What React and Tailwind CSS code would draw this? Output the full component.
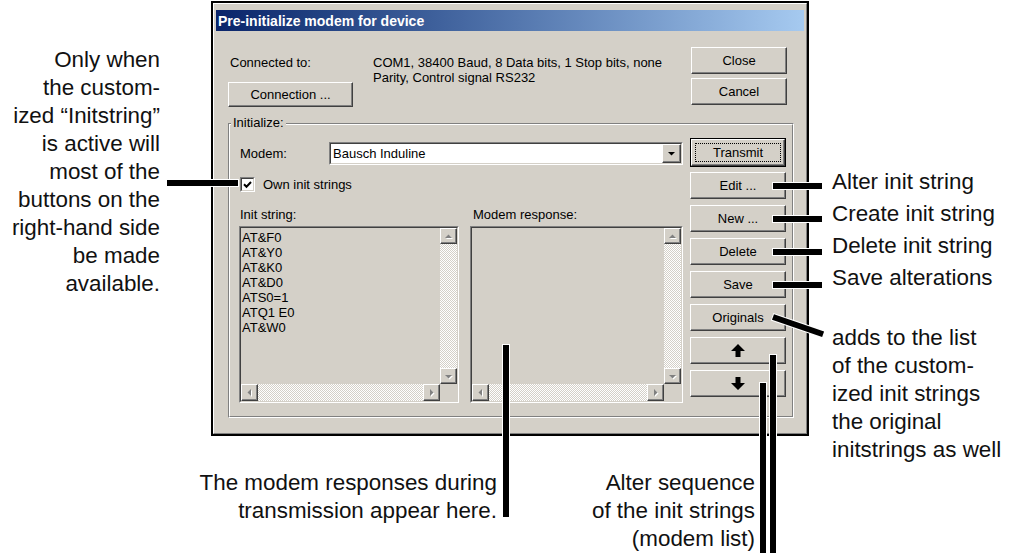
import React from 'react';

const raised =
  'bg-[#d4d0c8] border border-t-white border-l-white border-r-[#404040] border-b-[#404040] shadow-[inset_-1px_-1px_#808080]';
const checker =
  'bg-[conic-gradient(#ffffff_25%,#d4d0c8_0_50%,#ffffff_0_75%,#d4d0c8_0)] bg-[length:2px_2px]';

const Button = ({ children, className = '' }) => (
  <div className={`w-[96px] h-[27px] flex items-center justify-center ${raised} ${className}`}>
    {children}
  </div>
);

// small grey (disabled) triangle of the scroll bar buttons
const ScrollBtn = ({ dir, className = '' }) => {
  const pts = {
    up: '1,6 4.5,2.5 8,6',
    down: '1,3 4.5,6.5 8,3',
    left: '6,1 2.5,4.5 6,8',
    right: '3,1 6.5,4.5 3,8',
  };
  return (
    <div className={`flex items-center justify-center ${raised} ${className}`}>
      <svg width="9" height="9" viewBox="0 0 9 9">
        <polygon points={pts[dir]} fill="#ffffff" transform="translate(1 1)" />
        <polygon points={pts[dir]} fill="#808080" />
      </svg>
    </div>
  );
};

const Sunken = ({ className = '', inner = '', children }) => (
  <div className={`border border-t-[#808080] border-l-[#808080] border-r-white border-b-white ${className}`}>
    <div className={`h-full border border-t-[#404040] border-l-[#404040] border-r-[#d4d0c8] border-b-[#d4d0c8] ${inner}`}>
      {children}
    </div>
  </div>
);

const ListBox = ({ width, items = [] }) => (
  <Sunken className={`${width} h-[177px]`} inner="grid grid-cols-[1fr_17px] grid-rows-[1fr_17px]">
    <div className="pl-[1px] pt-[1.5px] leading-[15px]">
      {items.map((it) => (
        <div key={it}>{it}</div>
      ))}
    </div>
    <div className="flex flex-col">
      <ScrollBtn dir="up" className="h-[16px]" />
      <div className={`flex-1 ${checker}`} />
      <ScrollBtn dir="down" className="h-[16px]" />
    </div>
    <div className="flex">
      <ScrollBtn dir="left" className="w-[17px]" />
      <div className={`flex-1 ${checker}`} />
      <ScrollBtn dir="right" className="w-[17px]" />
    </div>
    <div className="bg-[#d4d0c8]" />
  </Sunken>
);

const Arrow = ({ down }) => (
  <svg width="14" height="13" viewBox="0 0 14 13" className={down ? 'rotate-180' : ''}>
    <path d="M7 0 L14 7 H9.5 V13 H4.5 V7 H0 Z" fill="#000" />
  </svg>
);

const Dialog = () => (
  <div className="mt-[1px] w-[598px] h-[435px] shrink-0 border-2 border-black">
    <div className="h-full bg-[#d4d0c8] border border-t-white border-l-white border-r-[#808080] border-b-[#808080] px-[2px] pt-[6px] text-[13px] text-black">
      {/* title bar */}
      <div className="h-[21px] flex items-center pl-[2px] pt-[2px] bg-linear-to-r from-[#0a246a] to-[#a6caf0] text-white font-bold text-[14px]">
        Pre-initialize modem for device
      </div>

      <div className="pl-[12px] pr-[10px]">
        {/* connection info */}
        <div className="mt-[16px] flex justify-between">
          <div className="flex">
            <div className="w-[145px]">
              <div className="pl-[2px] pt-[8px] leading-[15px]">Connected to:</div>
              <div className={`mt-[12px] w-[125px] h-[25px] flex items-center justify-center ${raised}`}>
                Connection ...
              </div>
            </div>
            <div className="pt-[8px] leading-[15px]">
              COM1, 38400 Baud, 8 Data bits, 1 Stop bits, none
              <br />
              Parity, Control signal RS232
            </div>
          </div>
          <div className="mr-[7px] flex flex-col gap-[4px]">
            <Button>Close</Button>
            <Button>Cancel</Button>
          </div>
        </div>

        {/* Initialize group */}
        <div className="mt-[16px] h-[295px] border border-t-[#808080] border-l-[#808080] border-r-white border-b-white">
          <div className="h-full border border-t-white border-l-white border-r-[#808080] border-b-[#808080]">
            <div className="-mt-[10px] ml-[1px] w-fit bg-[#d4d0c8] px-[2px] leading-[15px]">Initialize:</div>
            <div className="flex items-start">
              <div className="pl-[10px] pt-[12px] w-[453px]">
                <div className="flex items-center h-[23px]">
                  <div className="w-[89px]">Modem:</div>
                  <Sunken className="w-[354px] h-[23px]" inner="bg-white flex items-center">
                    <div className="flex-1 pl-[2px]">Bausch Induline</div>
                    <div className={`w-[19px] h-full flex items-center justify-center ${raised}`}>
                      <svg width="9" height="9" viewBox="0 0 9 9">
                        <polygon points="1,3 8,3 4.5,6.5" fill="#000" />
                      </svg>
                    </div>
                  </Sunken>
                </div>

                <div className="mt-[12px] flex items-center h-[15px]">
                  <Sunken className="w-[15px] h-[15px]" inner="bg-white flex items-center justify-center">
                    <svg width="9" height="9" viewBox="0 0 9 9">
                      <path d="M1 4.2 L3.5 6.7 L8 2" stroke="#000" strokeWidth="2" fill="none" />
                    </svg>
                  </Sunken>
                  <div className="ml-[8px]">Own init strings</div>
                </div>

                <div className="mt-[15px] flex leading-[15px]">
                  <div className="w-[233px]">Init string:</div>
                  <div>Modem response:</div>
                </div>

                <div className="mt-[4px] -ml-px flex gap-[11px]">
                  <ListBox
                    width="w-[220px]"
                    items={['AT&F0', 'AT&Y0', 'AT&K0', 'AT&D0', 'ATS0=1', 'ATQ1 E0', 'AT&W0']}
                  />
                  <ListBox width="w-[213px]" />
                </div>
              </div>

              <div className="ml-[7px] pt-[8px] w-[96px]">
                <div className="h-[29px] border border-black">
                  <div className={`h-full flex items-center justify-center p-[3px] ${raised}`}>
                    <div className="h-full w-full flex items-center justify-center border border-dotted border-black">
                      Transmit
                    </div>
                  </div>
                </div>
                <Button className="mt-[5px]">Edit ...</Button>
                <Button className="mt-[6px]">New ...</Button>
                <Button className="mt-[6px]">Delete</Button>
                <Button className="mt-[6px]">Save</Button>
                <Button className="mt-[6px]">Originals</Button>
                <Button className="mt-[6px]">
                  <Arrow />
                </Button>
                <Button className="mt-[6px]">
                  <Arrow down />
                </Button>
              </div>
            </div>
          </div>
        </div>
      </div>
    </div>
  </div>
);

const Line = ({ className }) => (
  <div className={`absolute bg-black shadow-[0_0_0_1px_#ffffff] ${className}`} />
);

export default function App() {
  return (
    <div className="relative w-[1013px] h-[553px] overflow-hidden bg-white text-[#111] font-['Liberation_Sans',Arial,sans-serif]">
      <div className="flex items-start h-[436px]">
        <div className="w-[211px] shrink-0 pr-[51px] pt-[46px] text-right text-[22.4px] leading-[28px]">
          Only when
          <br />
          the custom-
          <br />
          ized “Initstring”
          <br />
          is active will
          <br />
          most of the
          <br />
          buttons on the
          <br />
          right-hand side
          <br />
          be made
          <br />
          available.
        </div>

        <Dialog />

        <div className="ml-[23px] pt-[168px] text-[22.4px] leading-[28px] whitespace-nowrap">
          <div className="h-[32px]">Alter init string</div>
          <div className="h-[32px]">Create init string</div>
          <div className="h-[32px]">Delete init string</div>
          <div className="h-[32px]">Save alterations</div>
          <div className="mt-[28px]">
            adds to the list
            <br />
            of the custom-
            <br />
            ized init strings
            <br />
            the original
            <br />
            initstrings as well
          </div>
        </div>
      </div>

      <div className="mt-[33px] flex text-right text-[22.4px] leading-[28px] whitespace-nowrap">
        <div className="w-[497px]">
          The modem responses during
          <br />
          transmission appear here.
        </div>
        <div className="w-[258px]">
          Alter sequence
          <br />
          of the init strings
          <br />
          (modem list)
        </div>
      </div>

      {/* leader lines */}
      <Line className="left-[167px] top-[180px] w-[71px] h-[6px]" />
      <Line className="left-[773px] top-[183px] w-[49px] h-[6px]" />
      <Line className="left-[773px] top-[216px] w-[49px] h-[6px]" />
      <Line className="left-[773px] top-[249px] w-[49px] h-[6px]" />
      <Line className="left-[773px] top-[282px] w-[49px] h-[6px]" />
      <Line className="left-[773px] top-[314px] w-[53px] h-[6px] origin-left rotate-[19deg]" />
      <Line className="left-[503px] top-[345px] w-[6px] h-[172px]" />
      <Line className="left-[760px] top-[383px] w-[6px] h-[180px]" />
      <Line className="left-[770px] top-[355px] w-[6px] h-[210px]" />
    </div>
  );
}
